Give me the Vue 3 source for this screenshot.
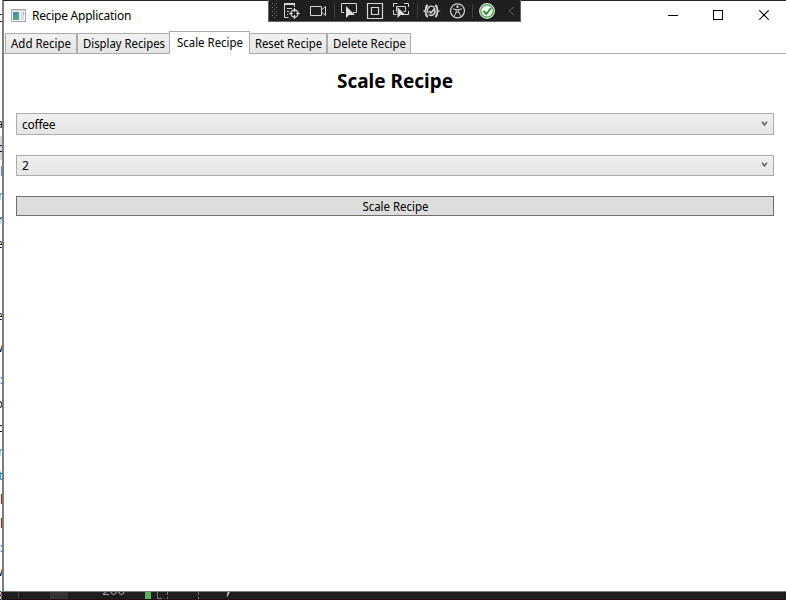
<script setup>
import { ref } from 'vue'

const tabs = [
  { id: 'add', label: 'Add Recipe', width: 60 },
  { id: 'display', label: 'Display Recipes', width: 82 },
  { id: 'scale', label: 'Scale Recipe', width: 66 },
  { id: 'reset', label: 'Reset Recipe', width: 67 },
  { id: 'delete', label: 'Delete Recipe', width: 73 },
]
const active = ref('scale')
const fields = [
  { id: 'recipe', value: 'coffee' },
  { id: 'factor', value: '2' },
]
// Editor lines behind the window, only their last pixels are visible
const lines = [
  { t: 'a', h: 24 }, { t: 'c', h: 24, sel: true }, { t: 'l', h: 24, b: true }, { t: 'r', h: 24, b: true },
  { t: 'r', h: 24 }, { t: 'e', h: 24 }, { t: '', h: 48 }, { t: 'e', h: 24 }, { t: 'w', h: 40 },
  { t: ':', h: 24, b: true }, { t: 'p', h: 24 }, { t: 'c', h: 24 }, { t: 'r', h: 24, b: true },
  { t: 't', h: 24, b: true }, { t: 'l', h: 24 }, { t: 'l', h: 24 }, { t: ':', h: 24, b: true },
  { t: 'w', h: 24 }, { t: '3', h: 24 },
]
</script>

<template>
  <div class="screen">
    <div class="behind-left">
      <div v-for="(l, i) in lines" :key="i" class="line" :class="{ sel: l.sel, blue: l.b }" :style="{ height: l.h + 'px' }">{{ l.t }}</div>
    </div>
    <div class="window-col">
      <main class="window">
        <header class="titlebar">
          <svg class="app-icon" width="15" height="13" viewBox="0 0 15 13">
            <defs>
              <linearGradient id="pane" x1="0" y1="0" x2="1" y2="1">
                <stop offset="0" stop-color="#4a7fb5" /><stop offset="1" stop-color="#5fae78" />
              </linearGradient>
            </defs>
            <rect x=".5" y=".5" width="14" height="12" fill="#f5f5f5" stroke="#a5a9ad" />
            <rect x="1" y="1" width="13" height="1" fill="#d5d8dc" />
            <rect x="2" y="3" width="6" height="8" fill="url(#pane)" />
            <rect x="9" y="3" width="4" height="8" fill="#dcdfe2" />
            <path d="M12.5 3v1M12.5 5v1" stroke="#7bac83" />
          </svg>
          <span class="title">Recipe Application</span>
          <div class="caption">
            <svg width="11" height="11" viewBox="0 0 11 11"><path d="M1 5.500h10" stroke="#000" /></svg>
            <svg width="11" height="11" viewBox="0 0 11 11"><rect x=".5" y=".5" width="9" height="9" fill="none" stroke="#000" /></svg>
            <svg width="11" height="11" viewBox="0 0 11 11"><path d="M.3.3l9.400 9.400M9.700.3L.3 9.700" stroke="#000" stroke-width="1.100" /></svg>
          </div>
        </header>

        <nav class="tabs">
          <button v-for="t in tabs" :key="t.id" class="tab" :class="[t.id, { active: active === t.id }]" @click="active = t.id">
            <svg class="label" :width="t.width" height="18"><text x="0" y="13" :textLength="t.width" lengthAdjust="spacingAndGlyphs">{{ t.label }}</text></svg>
          </button>
        </nav>

        <section class="panel">
          <h1><svg width="116" height="28"><text x="0" y="20" textLength="116" lengthAdjust="spacingAndGlyphs">Scale Recipe</text></svg></h1>
          <div v-for="f in fields" :key="f.id" class="combo" :class="f.id">
            <span>{{ f.value }}</span>
            <svg width="7" height="6" viewBox="0 0 7 6"><path d="M1 .6L3.500 4 6 .6" fill="none" stroke="#606060" stroke-width="1.600" /></svg>
          </div>
          <button class="action"><svg width="66" height="18"><text x=".4" y="14" textLength="66" lengthAdjust="spacingAndGlyphs">Scale Recipe</text></svg></button>
        </section>
      </main>

      <footer class="behind-bottom">
        <svg width="784" height="8" viewBox="2 592 784 8">
          <path d="M18.500 592v8" stroke="#3c3c3c" />
          <rect x="50" y="592" width="18" height="8" fill="#333" />
          <text x="102" y="595" class="code-num">200</text>
          <rect x="145" y="592" width="6" height="8" fill="#57b255" />
          <path d="M157.500 592v8M157 598.500h5" stroke="#777" />
          <path d="M167.500 592v8M198.500 592v8" stroke="#777" stroke-dasharray="3 2" />
          <text x="224.500" y="593.500" class="code-num semi">;</text>
          <rect x="2" y="599" width="784" height="1" fill="#260e12" />
        </svg>
      </footer>
    </div>

    <aside class="debugbar">
      <svg width="253" height="22" viewBox="268 0 253 22" fill="none" stroke="#d6d6d6">
        <rect x="268.5" y="-.5" width="252" height="22" fill="#1f1f1f" stroke="#656565" />
        <g stroke="#747474" stroke-dasharray="1 3">
          <path d="M272.5 3v16M276.5 3v16" /><path d="M274.5 5v14" />
        </g>
        <g>
          <path d="M284 4h11" stroke-width="2" />
          <path d="M284.5 4v13.5h4M294.500 4v3M287 8.500h5M287 11.500h2M287 14.500h1" />
          <circle cx="294.500" cy="13.500" r="3.500" stroke-width="1.300" />
          <path d="M294.500 8v4M294.500 15v4M289 13.500h4M296 13.500h4" stroke-width="1.200" />
        </g>
        <path d="M310.500 6.500h11v9h-11zM322 9.500l3.500-3v9l-3.500-3" />
        <path d="M334.500 4v14M417.500 4v14M472.500 4v14" stroke="#3f3f3f" />
        <g>
          <path d="M344 12.500h-2.500v-9h15v9H353" />
          <path d="M346 6v12l3-3h6z" fill="#e0e0e0" stroke="none" />
        </g>
        <path d="M367.500 3.500h15v15h-15zM371.500 7.500h7v7h-7z" stroke-width="1.200" />
        <g>
          <path d="M393.500 7V3.500h4M404 3.500h4.500V7M408.500 11v3.500H405M393.500 10v4.500h3M396.500 11.500v-5h9v5h-2" />
          <path d="M397.500 7v11l3-3h5z" fill="#dcdcdc" stroke="none" />
        </g>
        <g stroke-width="1.800">
          <path d="M428 5.500c-2 0-2 1-2 2.500s0 2.500-1.200 3c1.200.5 1.200 1.500 1.200 3s0 2.500 2 2.500M435 5.500c2 0 2 1 2 2.500s0 2.500 1.200 3c-1.200.5-1.200 1.500-1.200 3s0 2.500-2 2.500" />
          <path d="M434.500 7.500a4 4 0 0 0-6 5.500M428.500 14.500a4 4 0 0 0 6-5M429.500 11l1.500 2 4-5" stroke-width="1.500" />
        </g>
        <g>
          <circle cx="457.500" cy="10.800" r="7" stroke-width="1.200" />
          <circle cx="457.500" cy="6.800" r="1.200" fill="#d6d6d6" stroke="none" />
          <path d="M453 8.700l3 1h3l3-1M456.200 9.700v2.500l-1.700 3.500M458.800 9.700v2.500l1.700 3.500M456.200 12.200h2.600" />
        </g>
        <circle cx="487" cy="11" r="7.200" fill="#f3f8f3" stroke="#d9e9d9" stroke-width="1.500" />
        <circle cx="487" cy="11" r="6.200" stroke="#429b48" stroke-width="1.200" />
        <path d="M483.500 11l2.800 3 4.700-6" stroke="#2f9438" stroke-width="1.900" />
        <path d="M514 7l-5 4 5 4" stroke="#626262" />
      </svg>
    </aside>
  </div>
</template>

<style>
html, body { margin: 0; overflow: hidden; }
</style>

<style scoped>
* { box-sizing: border-box; }
.screen {
  position: relative; display: flex; width: 786px; height: 600px; overflow: hidden; background: #fff;
  font-family: "Noto Sans", "Open Sans", sans-serif; font-size: 12px; color: #000;
}
.behind-left { flex: none; width: 2px; height: 600px; padding-top: 112px; overflow: hidden; background: linear-gradient(#333, #333) 0 14px / 2px 1px no-repeat, linear-gradient(#333, #333) 0 21px / 2px 1px no-repeat, #fff; }
.line { display: flex; justify-content: flex-end; align-items: center; width: 5px; margin-left: -2px; font-size: 12px; line-height: 1; color: #171525; }
.line.sel { background: #d8d8d8; }
.line.blue { color: #1c80bc; }
.window-col { display: flex; flex-direction: column; width: 784px; }
.window { display: flex; flex-direction: column; height: 592px; border: solid; border-width: 1px 0 1px 2px; border-color: #252327 #252327 #777 #7d7d7d; background: #fff; }
.titlebar { display: flex; align-items: center; height: 30px; flex: none; padding: 0 16px 0 7px; }
.title { margin-left: 6px; font-size: 12px; letter-spacing: -.25px; line-height: 16px; padding-bottom: 1px; }
.app-icon { margin-top: -2px; }
.caption { display: flex; gap: 35px; margin-left: auto; padding-top: 0; }
.caption svg { display: block; margin-top: -1px; }
.tabs { display: flex; align-items: flex-end; flex: none; height: 23px; padding-left: 1px; border-bottom: 1px solid #acacac; }
.tab {
  display: flex; justify-content: center; height: 20px; margin: 0; padding: 1px 0 0; border: 1px solid #acacac; border-bottom: 0;
  background: linear-gradient(#f1f1f1, #e5e5e5); font: inherit; color: #000;
}
.tab svg { display: block; overflow: visible; flex: none; }
.tab.add { width: 72px; }
.tab.display { width: 93px; }
.tab.scale { width: 81px; margin-left: -1px; }
.tab.reset { width: 78px; margin-left: -1px; }
.tab.delete { width: 84px; }
.tab.active { position: relative; z-index: 1; height: 23px; margin-bottom: -1px; padding-top: 2px; background: #fff; }
.panel { display: flex; flex-direction: column; padding: 14px 12px 0; }
h1 { display: flex; justify-content: center; height: 45px; margin: 0; font-size: 20px; font-weight: 700; line-height: 1; }
.combo {
  display: flex; align-items: center; justify-content: space-between; height: 22px; padding: 0 5px; margin-bottom: 20px;
  border: 1px solid #acacac; background: linear-gradient(#f0f0f0, #e5e5e5); line-height: 16px;
}
.combo span { padding-top: 2px; letter-spacing: -.25px; }
.combo svg { margin-top: -1px; }
.combo.factor { height: 21px; }
.combo.factor span { padding-top: 0; }
.action { display: flex; justify-content: center; height: 20px; padding: 0; border: 1px solid #707070; background: #ddd; font: inherit; color: #000; }
.action svg { display: block; overflow: visible; }
.behind-bottom { height: 8px; background: #1e1e1e; }
.behind-bottom svg { display: block; }
.code-num { font: 13px "Liberation Mono", monospace; fill: #a0a0a0; }
.semi { fill: #e0e0e0; }
.debugbar { position: absolute; top: 0; left: 268px; width: 253px; height: 22px; }
.debugbar svg { display: block; }
</style>
